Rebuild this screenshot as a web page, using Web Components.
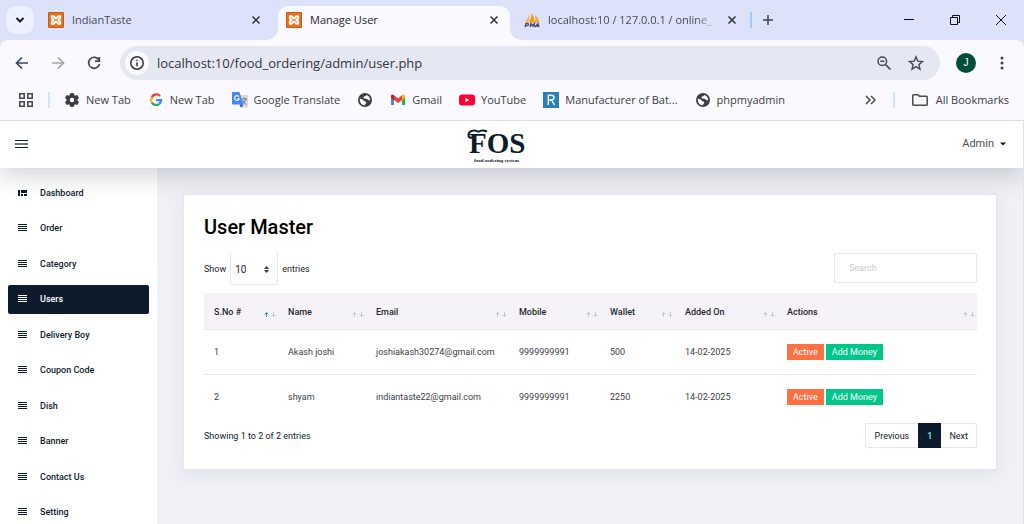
<!DOCTYPE html>
<html lang="en">
<head>
<meta charset="utf-8">
<title>Manage User</title>
<style>
  html, body { margin: 0; height: 100%; }
  body { overflow: hidden; font: 11px/16px "Open Sans", "Noto Sans", sans-serif; color: #3c4043; background: #f0f1f6; }
</style>
</head>
<body>
<browser-window>
  <tab-strip slot="tabs">
    <browser-tab icon="xampp">IndianTaste</browser-tab>
    <browser-tab icon="xampp" active>Manage User</browser-tab>
    <browser-tab icon="pma">localhost:10 / 127.0.0.1 / online_</browser-tab>
  </tab-strip>
  <address-bar slot="address" url="localhost:10/food_ordering/admin/user.php"></address-bar>
  <bookmarks-bar slot="bookmarks">
    <book-mark icon="gear">New Tab</book-mark>
    <book-mark icon="google">New Tab</book-mark>
    <book-mark icon="translate">Google Translate</book-mark>
    <book-mark icon="globe" label="Website"></book-mark>
    <book-mark icon="gmail">Gmail</book-mark>
    <book-mark icon="youtube">YouTube</book-mark>
    <book-mark icon="r">Manufacturer of Bat...</book-mark>
    <book-mark icon="globe">phpmyadmin</book-mark>
    <book-mark slot="all" icon="folder">All Bookmarks</book-mark>
  </bookmarks-bar>
  <admin-page>
    <admin-header slot="header"></admin-header>
    <side-nav slot="nav">
      <nav-item icon="dashboard">Dashboard</nav-item>
      <nav-item>Order</nav-item>
      <nav-item>Category</nav-item>
      <nav-item active>Users</nav-item>
      <nav-item>Delivery Boy</nav-item>
      <nav-item>Coupon Code</nav-item>
      <nav-item>Dish</nav-item>
      <nav-item>Banner</nav-item>
      <nav-item>Contact Us</nav-item>
      <nav-item>Setting</nav-item>
    </side-nav>
    <data-card heading="User Master">
      <table-controls></table-controls>
      <user-table></user-table>
      <table-footer></table-footer>
    </data-card>
  </admin-page>
</browser-window>

<script>
const svg = (w, h, body, extra = '') =>
  `<svg width="${w}" height="${h}" viewBox="0 0 ${w} ${h}" fill="none" aria-hidden="true" ${extra}>${body}</svg>`;

const icons = {
  xampp: svg(16, 16, `<rect width="16" height="16" rx="1" fill="#e9701c"/><rect x=".5" y=".5" width="15" height="15" rx="1" stroke="#c95a14"/>
    <path d="M5 4C3.300 4 3.200 6.600 4.800 7.200C5.800 7.500 5.800 8.500 4.800 8.800C3.200 9.400 3.300 12 5 12C6.700 12 6.500 9.600 8 9.600C9.500 9.600 9.300 12 11 12C12.700 12 12.800 9.400 11.200 8.800C10.200 8.500 10.200 7.500 11.200 7.200C12.800 6.600 12.700 4 11 4C9.300 4 9.500 6.400 8 6.400C6.500 6.400 6.700 4 5 4Z" stroke="#fff" stroke-width="2" fill="#e9701c"/>`),
  pma: svg(16, 16, `<path d="M1 10.500L5 3C5.500 6 5.400 8.500 5 10.500Z" fill="#f6b96a"/><path d="M5.500 10.500C6.500 7 7.500 3 7.500 1C9.500 4 10.500 7.500 10.500 10.500Z" fill="#f89c0e"/><path d="M11 10.500C11.500 7 11.500 5 11 3C13.500 5 15 8 15.500 10.500Z" fill="#f6a93b"/>
    <path d="M1 15L2 11.500H3.500Q4.800 11.500 4.400 12.800Q4 13.800 2 13.800M6 15L7 11.500L8.300 13.800L10.500 11.500L10 15M11 15L14 11.500L15 15M12.500 14H15" stroke="#4c4a66" stroke-width="1.300"/>`),
  gear: svg(16, 16, `<path fill="#3c4043" fill-rule="evenodd" d="M6.300 1H9.700L10.100 3A5.500 5.500 0 0 1 11.500 3.800L13.400 3.100L15 6L13.500 7.300A5 5 0 0 1 13.500 8.700L15 10L13.400 12.900L11.500 12.200A5.500 5.500 0 0 1 10.100 13L9.700 15H6.300L5.900 13A5.500 5.500 0 0 1 4.500 12.200L2.600 12.900L1 10L2.500 8.700A5 5 0 0 1 2.500 7.300L1 6L2.600 3.100L4.500 3.800A5.500 5.500 0 0 1 5.900 3ZM8 5.800A2.200 2.200 0 1 0 8 10.200A2.200 2.200 0 0 0 8 5.800Z"/>`),
  google: svg(16, 16, `<g stroke-width="2.400"><path d="M12 4A5 5 0 0 0 3.700 5.500" stroke="#ea4335"/><path d="M3.700 5.500A5 5 0 0 0 3.700 10.500" stroke="#fbbc05"/><path d="M3.700 10.500A5 5 0 0 0 11.300 11.800" stroke="#34a853"/><path d="M11.300 11.800A5 5 0 0 0 13 8.100H8" stroke="#4285f4"/></g>`),
  translate: svg(16, 16, `<path d="M6 3H15Q16 3 16 4V14Q16 15.500 15 15.500H9Z" fill="#d7d9dc"/><path d="M9.500 7H15M12.200 5.500V7M14 7Q13 10.500 10 12M10.800 8.500Q12 11 14.500 12.500" stroke="#70777d"/><path d="M1 0H7.500L11.500 12.500H1Q0 12.500 0 11.500V1Q0 0 1 0Z" fill="#4285f4"/><path d="M7.500 12.500H11.500L9 15.700Z" fill="#3056b5"/><path d="M7 4.700A2.400 2.400 0 1 0 7.300 6.700H5.200" stroke="#fff" stroke-width="1.100"/>`),
  globe: svg(16, 16, `<circle cx="8" cy="8" r="7" fill="#3c4043"/><path d="M2.800 6.500C4.500 7 6 7.600 6.800 8.700C7.400 9.500 9 9.300 9.200 10.500C9.300 11.500 8.200 11.800 7.800 13.200C4.800 13.200 2.500 10.600 2.800 6.500ZM6.500 5.500C6.500 4.500 7.500 4.400 8.500 4.300L9.400 2.900C11.800 3.500 13.200 5.800 13.100 8C12 8.600 11.300 7.800 10.300 7.200C9 6.500 6.500 7 6.500 5.500Z" fill="#fff"/>`),
  gmail: svg(16, 16, `<path d="M1 4V13H4V6.500Z" fill="#4285f4"/><path d="M15 4V13H12V6.500Z" fill="#34a853"/><path d="M1 4.500V3.500Q2 1.800 4 3.300V8L1 6Z" fill="#c5221f"/><path d="M4 3.300L8 6.500L12 3.300V8L8 11L4 8Z" fill="#ea4335"/><path d="M12 3.300Q14 1.800 15 3.500V5.500L12 8Z" fill="#fbbc04"/>`),
  youtube: svg(16, 16, `<rect y="2.500" width="16" height="11" rx="3" fill="#f03"/><path d="M6.400 5.700V10.300L10.300 8Z" fill="#fff"/>`),
  r: svg(16, 16, `<rect width="16" height="16" fill="#2980b9"/><path d="M5.300 13V3.200H8.300C12 3.200 12 8 8.300 8H5.500M8.500 8L11.500 13" stroke="#fff" stroke-width="1.400"/>`),
  folder: svg(16, 16, `<path d="M.8 3.500Q.8 2.700 1.600 2.700H6L7.500 4.300H14.400Q15.200 4.300 15.200 5.100V12.400Q15.200 13.300 14.400 13.300H1.600Q.8 13.300 .8 12.400Z" stroke="#474a50" stroke-width="1.500"/>`),
  close: svg(16, 16, `<path d="M4.500 4.500L11.500 11.500M11.500 4.500L4.500 11.500" stroke="#30343c" stroke-width="1.500"/>`),
  dashboard: svg(9, 8, `<path d="M0 1H2V7H0ZM3 1H9V4H3ZM3 5H5V7H3ZM6 5H9V7H6Z" fill="#0e1b2c"/>`),
  menu: svg(9, 8, `<path d="M0 .5H9M0 2.500H9M0 4.500H9M0 6.500H9" stroke="currentColor"/>`),
  sort: svg(12, 5, `<path d="M2.500 5V.5M.5 2.500L2.500 .5L4.500 2.500" stroke="var(--up, #c6c6cc)"/><path d="M9.500 0V4.500M7.500 2.500L9.500 4.500L11.500 2.500" stroke="#c6c6cc"/>`)
};

const base = `:host,*{box-sizing:border-box}button{font:inherit;color:inherit;border:0;background:none;padding:0;margin:0;display:grid;place-items:center}svg{display:block;flex:none}a{color:inherit;text-decoration:none}`;

function define(name, css, html) {
  customElements.define(name, class extends HTMLElement {
    constructor() {
      super();
      const t = document.createElement('template');
      t.innerHTML = `<style>${base}${css}</style>${typeof html === 'function' ? html(this) : html}`;
      this.attachShadow({ mode: 'open' }).append(t.content.cloneNode(true));
    }
  });
}

define('browser-window', `
  :host{display:flex;flex-direction:column;height:100vh;background:#dbe2f9}
  .chrome{background:#f9f9ff;border-radius:8px 8px 0 0;border-bottom:1px solid #dfdfea;flex:none}
  main{flex:1;min-height:0;overflow:hidden;display:flex;flex-direction:column;border-right:1px solid #e2e3ec}`,
  `<slot name="tabs"></slot><div class="chrome"><slot name="address"></slot><slot name="bookmarks"></slot></div><main><slot></slot></main>`);

define('tab-strip', `
  :host{display:flex;height:40px;flex:none;padding-left:6px;align-items:center;background:#dbe2f9}
  .search{width:28px;height:28px;border-radius:10px;background:#edf1ff}
  nav{display:flex;gap:6px;margin-left:6px;align-self:stretch;padding-top:6px;min-width:0;flex:0 1 708px}
  i{width:2px;height:16px;background:#a8c7fa;margin:0 6px 0 2px}
  .new{width:20px;height:20px}
  .win{display:flex;margin-left:auto}.win button{width:46px;height:40px}`,
  `<button class="search" aria-label="Search tabs">${svg(10, 8, '<path d="M1.500 2L5 5.500L8.500 2" stroke="#1b1d22" stroke-width="2"/>')}</button>
   <nav><slot></slot></nav><i></i>
   <button class="new" aria-label="New tab">${svg(12, 12, '<path d="M6 1V11M1 6H11" stroke="#3c4250" stroke-width="1.500"/>')}</button>
   <div class="win">
   <button aria-label="Minimize">${svg(10, 10, '<path d="M0 4.500H10" stroke="#111"/>')}</button>
   <button aria-label="Restore">${svg(10, 10, '<path d="M.5 2.500H7.500V9.500H.5ZM2.500 2.500V.5H9.500V7.500H7.500" stroke="#111"/>')}</button>
   <button aria-label="Close">${svg(10, 10, '<path d="M0 0L10 10M10 0L0 10" stroke="#111"/>')}</button></div>`);

define('browser-tab', `
  :host{display:flex;align-items:center;gap:8px;flex:1 1 0;min-width:0;padding:0 8px 6px;position:relative;color:#454a57}
  :host([active]){background:#f9f9ff;border-radius:10px 10px 0 0;color:#23252b}
  :host([active])::before,:host([active])::after{content:"";position:absolute;bottom:0;width:10px;height:10px}
  :host([active])::before{left:-10px;background:radial-gradient(circle at 0 0,transparent 9px,#f9f9ff 10px)}
  :host([active])::after{right:-10px;background:radial-gradient(circle at 100% 0,transparent 9px,#f9f9ff 10px)}
  span{flex:1;min-width:0;overflow:hidden;white-space:nowrap}
  :host([icon=pma]) span{-webkit-mask-image:linear-gradient(90deg,#000 88%,transparent);mask-image:linear-gradient(90deg,#000 88%,transparent)}`,
  el => `${icons[el.getAttribute('icon')]}<span><slot></slot></span><button aria-label="Close tab">${icons.close}</button>`);

define('address-bar', `
  :host{display:flex;align-items:center;gap:8px;height:46px;padding:0 8px;color:#3f4350}
  button{width:28px;height:28px;flex:none}
  .pill{flex:1;margin:0 4px;height:34px;border-radius:17px;background:#e5e8f3;display:flex;align-items:center;gap:8px;padding:0 12px 0 5px}
  .pill button{width:24px;height:24px}
  .pill .info{background:#f9f9ff;border-radius:50%}
  input{flex:1;min-width:0;border:0;background:none;padding:0;font:13px/20px "Open Sans","Noto Sans",sans-serif;color:#33363c;outline:0}
  .av{width:20px;height:20px;border-radius:50%;background:#004d40;color:#fff;font:10px/20px "Liberation Sans",sans-serif;text-align:center}`,
  el => `<button aria-label="Back">${svg(16, 16, '<path d="M14 8H3M8 2.500L2.500 8L8 13.500" stroke="#3f4758" stroke-width="1.700"/>')}</button>
  <button aria-label="Forward">${svg(16, 16, '<path d="M2 8H13M8 2.500L13.500 8L8 13.500" stroke="#a5a6ae" stroke-width="1.700"/>')}</button>
  <button aria-label="Reload">${svg(16, 16, '<path d="M13 5.200A5.500 5.500 0 1 0 13.500 9M13.300 2V6.200H9" stroke="#3f4758" stroke-width="1.700"/>')}</button>
  <div class="pill"><button class="info" aria-label="Site information">${svg(16, 16, '<circle cx="8" cy="8" r="6.200" stroke="#2f3238" stroke-width="1.500"/><path d="M8 7.200V11.300M8 4.700V6.100" stroke="#2f3238" stroke-width="1.500"/>')}</button>
  <input type="text" aria-label="Address" value="${el.getAttribute('url')}">
  <button aria-label="Zoom">${svg(16, 16, '<circle cx="6.300" cy="6.300" r="4.300" stroke="#474a50" stroke-width="1.500"/><path d="M9.600 9.600L14.500 14.500M4.300 6.300H8.300" stroke="#474a50" stroke-width="1.600"/>')}</button>
  <button aria-label="Bookmark this page">${svg(16, 16, '<path d="M8 1.800L9.800 6.100L14.500 6.500L10.900 9.600L12 14.200L8 11.700L4 14.200L5.100 9.600L1.500 6.500L6.200 6.100Z" stroke="#474a50" stroke-width="1.400"/>')}</button></div>
  <button aria-label="Profile"><span class="av">J</span></button>
  <button aria-label="Menu">${svg(4, 16, '<circle cx="2" cy="3" r="1.500" fill="#3f4350"/><circle cx="2" cy="8" r="1.500" fill="#3f4350"/><circle cx="2" cy="13" r="1.500" fill="#3f4350"/>')}</button>`);

define('bookmarks-bar', `
  :host{display:flex;align-items:center;height:34px;padding:0 15px 6px 18px}
  i{width:2px;height:16px;background:#d3e3fd;flex:none}
  nav{display:flex;gap:17px;margin-left:14px;flex:1;min-width:0}
  .apps{margin-right:14px}.more{margin-right:17px}
  slot[name=all]{display:block;margin-left:17px}`,
  `<button class="apps" aria-label="Apps">${svg(16, 16, '<path d="M1.800 1.800H6.200V6.200H1.800ZM9.800 1.800H14.200V6.200H9.800ZM1.800 9.800H6.200V14.200H1.800ZM9.800 9.800H14.200V14.200H9.800Z" stroke="#474a50" stroke-width="1.600"/>')}</button><i></i>
  <nav><slot></slot></nav><button class="more" aria-label="More bookmarks">${svg(11, 10, '<path d="M1 1L5 5L1 9M6 1L10 5L6 9" stroke="#474a50" stroke-width="1.500"/>')}</button><i></i><slot name="all"></slot>`);

define('book-mark', `
  :host{display:block;flex:none}
  a{display:flex;align-items:center;gap:6px;color:#3c4043;white-space:nowrap}
  :host([slot=all]) a{gap:8px}`,
  el => `<a href="#" aria-label="${el.getAttribute('label') || el.textContent}">${icons[el.getAttribute('icon')]}${el.textContent ? '<span><slot></slot></span>' : ''}</a>`);

define('admin-page', `
  :host{display:grid;grid-template:auto 1fr/157px 1fr;flex:1;min-height:0;font:9px/14px Roboto,sans-serif;background:#f0f1f6;color:#0e1b2c}
  slot[name=header]{display:block;grid-column:1/3;z-index:2;position:relative}
  slot[name=nav]{display:block;background:#fff;min-height:0}
  .c{padding:26px;min-width:0}`,
  `<slot name="header"></slot><slot name="nav"></slot><div class="c"><slot></slot></div>`);

define('admin-header', `
  :host{display:flex;justify-content:space-between;align-items:center;height:47px;padding:0 17px 1px 15px;background:#fff;box-shadow:0 8px 25px rgba(40,40,60,.2)}
  .u{display:flex;align-items:center;gap:6px;font-size:11px;color:#4c4f56}`,
  `<button aria-label="Toggle menu">${svg(13, 8, '<path d="M0 .5H13M0 7.500H13" stroke="#0e1b2c"/><path d="M0 4H13" stroke="#70757d" stroke-width="2"/>')}</button>
  <svg width="60" height="40" viewBox="0 0 60 40" role="img" aria-label="FOS food ordering system" fill="#0e1b2c"><path d="M14 8C9 5 3.500 7 3.500 11C3.500 14.500 8 14.500 8 11.500" fill="none" stroke="#0e1b2c" stroke-width="2"/><path d="M13 8Q17 5.500 22 7.500" fill="none" stroke="#0e1b2c" stroke-width="2"/><text x="4" y="29" font-family="Liberation Serif, serif" font-weight="700" font-size="29">FOS</text><text x="9" y="38" font-family="Liberation Serif, serif" font-weight="700" font-size="5">food ordering system</text></svg>
  <button class="u">Admin ${svg(6, 4, '<path d="M0 .5H6L3 3.500Z" fill="#111"/>')}</button>`);

define('side-nav', `
  :host{display:block;padding:10px 8px 0}
  nav{display:grid;grid-auto-rows:1fr;gap:6px;height:349px}`,
  `<nav><slot></slot></nav>`);

define('nav-item', `
  :host{display:block;color:#0e1b2c}
  a{display:flex;align-items:center;gap:13px;height:100%;padding:0 10px;font-weight:500;border-radius:2px}
  :host([active]) a{background:#0e1b2c;color:#fff}`,
  el => `<a href="#">${icons[el.getAttribute('icon') || 'menu']}<span><slot></slot></span></a>`);

define('data-card', `
  :host{display:block;background:#fff;border:1px solid #e6e7ee;box-shadow:0 4px 16px rgba(40,45,80,.07);padding:19px 19px 21px 20px}
  h1{margin:0 0 13px;font:500 20px/26px Roboto,sans-serif;color:#000}`,
  el => `<h1>${el.getAttribute('heading')}</h1><slot></slot>`);

define('table-controls', `
  :host{display:flex;justify-content:space-between;align-items:flex-start;margin-bottom:8px;color:#212529}
  .l{display:flex;align-items:center;gap:4px;height:32px}
  select{appearance:none;width:48px;height:32px;margin:0;padding:2px 4px 0;border:1px solid #e6e6ee;border-top:0;border-radius:0 0 2px 2px;font:10px/14px Roboto,sans-serif;color:#212529;background:#fff}
  .s{display:grid;align-items:center}.s>*{grid-area:1/1}.s svg{justify-self:end;margin-right:9px}
  input{width:143px;height:30px;border:1px solid #e6e6ee;border-radius:2px;padding:0 14px;font:9px/14px Roboto,sans-serif;background:#fff;outline:0;margin:0}
  input::placeholder{color:#c9c9ce}`,
  `<div class="l"><label for="len">Show</label><div class="s"><select id="len"><option>10</option><option>25</option><option>50</option></select>${svg(5, 7, '<path d="M0 3L2.500 0L5 3ZM0 4L2.500 7L5 4Z" fill="#343a40"/>', 'style="pointer-events:none;z-index:1"')}</div><span>entries</span></div>
  <input type="search" aria-label="Search" placeholder="Search">`);

const columns = [['S.No #', 74], ['Name', 88], ['Email', 143], ['Mobile', 91], ['Wallet', 75], ['Added On', 102], ['Actions', 0]];
const users = [
  ['1', 'Akash joshi', 'joshiakash30274@gmail.com', '9999999991', '500', '14-02-2025'],
  ['2', 'shyam', 'indiantaste22@gmail.com', '9999999991', '2250', '14-02-2025']
];
define('user-table', `
  :host{display:block}
  table{width:100%;table-layout:fixed;border-collapse:separate;border-spacing:0}
  th,td{text-align:left;padding:0 0 0 10px;white-space:nowrap;border-bottom:1px solid #e6e6ec}
  th{height:37px;padding-top:2px;background:#f5f3f7;font-weight:500;color:#1f2733;position:relative}
  th svg{position:absolute;right:2px;top:19px}
  th:first-child{--up:#2f8ae0}
  td{height:45px;color:#3c4046}
  tr:last-child td{border:0;height:44px}
  .a{display:flex;gap:2px}
  .a button{height:16px;padding:0 6px;color:#fff;background:#ff7043}
  .a .g{background:#00c689}`,
  `<table><colgroup>${columns.map(c => c[1] ? `<col style="width:${c[1]}px">` : '<col>').join('')}</colgroup>
  <thead><tr>${columns.map(c => `<th scope="col">${c[0]}${icons.sort}</th>`).join('')}</tr></thead>
  <tbody>${users.map(u => `<tr>${u.map(v => `<td>${v}</td>`).join('')}<td><div class="a"><button>Active</button><button class="g">Add Money</button></div></td></tr>`).join('')}</tbody></table>`);

define('table-footer', `
  :host{display:flex;justify-content:space-between;align-items:center;margin-top:4px;color:#0e1b2c}
  nav{display:flex;height:25px;border:1px solid #e6e6ee;border-radius:2px}
  a{display:grid;place-items:center;padding:0 8px}
  a:first-child{padding:0 9px}
  .on{background:#0e1b2c;color:#6fe3ff;margin:-1px 0;font-weight:500;padding:0 9px}`,
  `<span>Showing 1 to 2 of 2 entries</span><nav aria-label="Pages"><a href="#">Previous</a><a href="#" class="on" aria-current="page">1</a><a href="#">Next</a></nav>`);
</script>
</body>
</html>
